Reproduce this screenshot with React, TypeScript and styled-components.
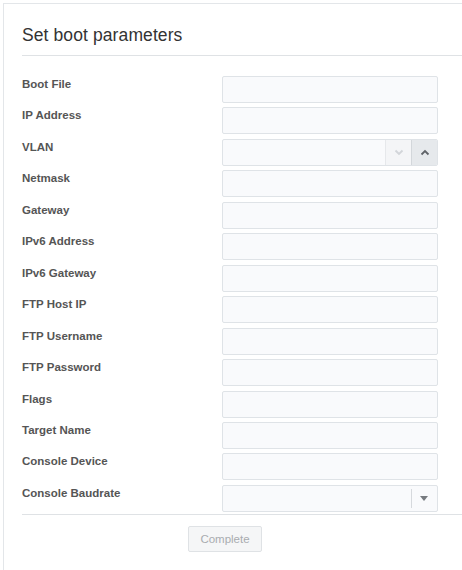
import React from 'react'
import styled, { createGlobalStyle } from 'styled-components'

const GlobalStyle = createGlobalStyle`
  html, body {
    margin : 0;
    padding : 0;
    overflow : hidden;
    background : #ffffff;
    font-family : "Liberation Sans", Arial, sans-serif;
  }
`

interface FieldDef {
  label : string
  kind? : 'text' | 'spinner' | 'select'
}

const fields : FieldDef[] = [
  { label : 'Boot File' },
  { label : 'IP Address' },
  { label : 'VLAN', kind : 'spinner' },
  { label : 'Netmask' },
  { label : 'Gateway' },
  { label : 'IPv6 Address' },
  { label : 'IPv6 Gateway' },
  { label : 'FTP Host IP' },
  { label : 'FTP Username' },
  { label : 'FTP Password' },
  { label : 'Flags' },
  { label : 'Target Name' },
  { label : 'Console Device' },
  { label : 'Console Baudrate', kind : 'select' },
]

const Chevron = ({ up, color } : { up? : boolean, color : string }) => (
  <svg width="10" height="7" viewBox="0 0 10 7">
    <polyline
      points={up ? '1.5,5.5 5,2 8.5,5.5' : '1.5,1.5 5,5 8.5,1.5'}
      fill="none"
      stroke={color}
      strokeWidth="1.8"
    />
  </svg>
)

const Field = ({ label, kind = 'text' } : FieldDef) => {
  return (
    <Row>
      <Label>{label}</Label>
      {kind === 'text' && <TextInput type="text" />}
      {kind === 'spinner' && (
        <InputShell>
          <ShellInput type="text" />
          <SpinButton>
            <Chevron color="#d2d5d9" />
          </SpinButton>
          <SpinButton $active>
            <Chevron up color="#5f6368" />
          </SpinButton>
        </InputShell>
      )}
      {kind === 'select' && (
        <InputShell>
          <ShellInput type="text" />
          <SelectToggle>
            <Caret />
          </SelectToggle>
        </InputShell>
      )}
    </Row>
  )
}

const App = () => {
  return (
    <>
      <GlobalStyle />
      <Panel>
        <Title>Set boot parameters</Title>
        <Divider />
        <Form>
          {fields.map((f) => (
            <Field key={f.label} label={f.label} kind={f.kind} />
          ))}
        </Form>
        <Divider $bottom />
        <Actions>
          <CompleteButton disabled>Complete</CompleteButton>
        </Actions>
      </Panel>
    </>
  )
}

// panel's right and bottom borders sit just outside the frame
const Panel = styled.div`
  margin : 3px 0 0 3px;
  width : 460px;
  height : 568px;
  box-sizing : border-box;
  border : 1px solid #e3e6e9;
  padding : 21px 0 0 18px;
`

const Title = styled.h2`
  margin : 0;
  font-size : 17.5px;
  font-weight : 400;
  line-height : 20px;
  color : #333333;
  letter-spacing : 0.1px;
`

const Divider = styled.div<{ $bottom? : boolean }>`
  height : 1px;
  background : #dfe2e5;
  margin : ${(props) => props.$bottom ? '2px 0 11px 0' : '10px 0 20px 0'};
`

const Form = styled.div`
  display : flex;
  flex-direction : column;
  gap : 4.46px;
`

const Row = styled.div`
  display : grid;
  grid-template-columns : 200px 216px;
  align-items : start;
  height : 27px;
`

const Label = styled.label`
  padding-top : 2px;
  font-size : 11.5px;
  font-weight : 700;
  color : #555555;
`

const TextInput = styled.input`
  box-sizing : border-box;
  width : 216px;
  height : 27px;
  margin : 0;
  border : 1px solid #dfe3e7;
  border-radius : 2px;
  background : #f9fafc;
  outline : none;
`

const InputShell = styled.div`
  box-sizing : border-box;
  width : 216px;
  height : 27px;
  display : flex;
  border : 1px solid #dfe3e7;
  border-radius : 2px;
  background : #f9fafc;
  overflow : hidden;
`

const ShellInput = styled.input`
  flex : 1;
  min-width : 0;
  margin : 0;
  border : none;
  background : transparent;
  outline : none;
`

const SpinButton = styled.div<{ $active? : boolean }>`
  width : 25px;
  display : flex;
  align-items : center;
  justify-content : center;
  border-left : 1px solid ${(props) => props.$active ? '#d3d7db' : '#e6e8eb'};
  background : ${(props) => props.$active ? '#e6e9ec' : '#f4f5f7'};
`

const SelectToggle = styled.div`
  width : 26px;
  display : flex;
  align-items : center;
  justify-content : center;
  position : relative;

  &::before {
    content : '';
    position : absolute;
    left : 0;
    top : 3px;
    bottom : 3px;
    width : 1px;
    background : #d6d9dd;
  }
`

const Caret = styled.span`
  width : 0;
  height : 0;
  border-left : 4.5px solid transparent;
  border-right : 4.5px solid transparent;
  border-top : 5px solid #777b80;
  margin-top : 1px;
`

const Actions = styled.div`
  padding-left : 166px;
`

const CompleteButton = styled.button`
  box-sizing : border-box;
  width : 74px;
  height : 26px;
  margin : 0;
  padding : 0;
  border : 1px solid #dfe2e5;
  border-radius : 2px;
  background : #f5f6f7;
  color : #a9acb0;
  font-family : "Liberation Sans", Arial, sans-serif;
  font-size : 11.5px;
`

export default App
